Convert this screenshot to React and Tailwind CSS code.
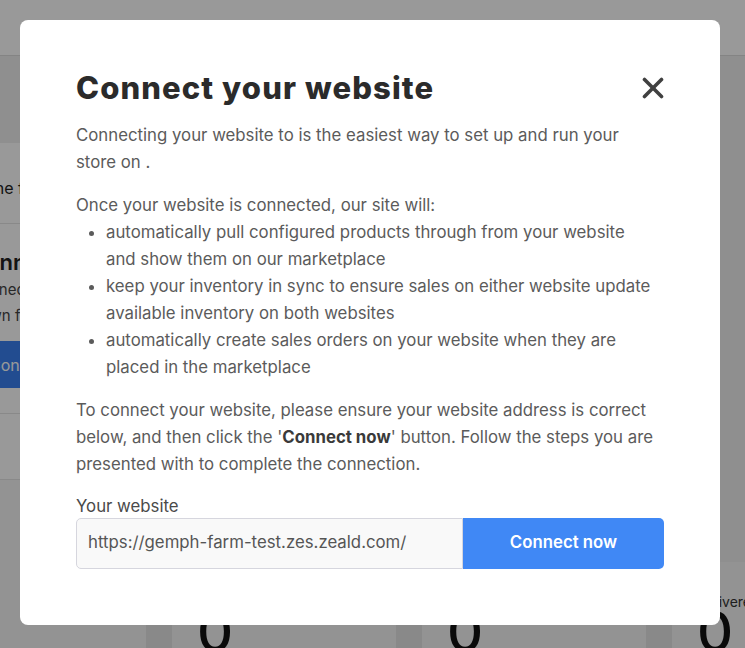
import React from "react";

const font = { fontFamily: "Inter, 'Noto Sans', sans-serif" };

function Background() {
  return (
    <div className="flex h-full w-full flex-col bg-[#eeeeee]">
      <div className="h-[56px] shrink-0 border-b border-[#dddddd] bg-white" />
      <div className="flex flex-1 flex-col">
        <div className="ml-[-130px] mt-[87px] flex w-[330px] flex-col">
          <div className="flex h-[80px] items-center whitespace-nowrap bg-white pl-[38px] pt-[10px] text-[16px] text-[#222]">
            Complete one field
          </div>
          <div className="flex h-[190px] flex-col whitespace-nowrap border-t border-[#e5e5e5] bg-white pl-[100px] pt-[23px]">
            <div className="text-[22px] font-semibold leading-[30px] text-[#222]">Connect</div>
            <div className="text-[15px] leading-[26px] text-[#444]">Connected sites</div>
            <div className="text-[15px] leading-[26px] text-[#444]">Down from here</div>
            <div className="ml-[-14px] mt-[12px] flex h-[47px] w-[200px] items-center bg-[#3a7ff0] pl-[33px] text-[16px] text-white">
              Connect
            </div>
          </div>
          <div className="h-[66px] border-t border-[#e5e5e5] bg-white" />
          <div className="h-[83px] border-t border-[#e5e5e5] bg-[#f6f6f6]" />
        </div>
        <div className="flex flex-1 gap-[26px] bg-[#e4e4e4]">
          <div className="ml-[-60px] w-[206px] shrink-0 bg-[#f5f5f5]" />
          {["Orders", "Pending", "Delivered"].map((label) => (
            <div key={label} className="flex w-[224px] shrink-0 flex-col bg-[#f5f5f5] pl-[25px] pt-[30px]">
              <div className="text-[14px] leading-[20px] text-[#333]">{label}</div>
              <div className="text-[56px] font-medium leading-[40px] text-[#111]">0</div>
            </div>
          ))}
        </div>
      </div>
    </div>
  );
}

function CloseIcon() {
  return (
    <svg width="22" height="22" viewBox="0 0 22 22" fill="none" stroke="#404040" strokeWidth="3.6" strokeLinecap="round">
      <line x1="2.5" y1="2.5" x2="19.5" y2="19.5" />
      <line x1="19.5" y1="2.5" x2="2.5" y2="19.5" />
    </svg>
  );
}

export default function App() {
  return (
    <div className="relative h-[648px] w-[745px] overflow-hidden" style={font}>
      <Background />
      <div className="absolute inset-0 bg-black/40 p-5">
        <div className="flex w-[700px] flex-col rounded-lg bg-white px-14 pb-14 pt-[50px] text-[16.8px] text-[#5b5b5b]">
          <div className="flex h-[36px] items-center justify-between">
            <h1 className="text-[31px] font-extrabold leading-[36px] tracking-[1.1px] text-[#2b2b2b]">
              Connect your website
            </h1>
            <CloseIcon />
          </div>
          <p className="mt-[15.5px] leading-[27px]">
            Connecting your website to is the easiest way to set up and run your
            <br />
            store on .
          </p>
          <p className="mt-4 leading-[27px]">Once your website is connected, our site will:</p>
          <ul className="list-disc pl-[30px] leading-[27px] marker:text-[#5b5b5b]">
            <li>
              automatically pull configured products through from your website
              <br />
              and show them on our marketplace
            </li>
            <li>
              keep your inventory in sync to ensure sales on either website update
              <br />
              available inventory on both websites
            </li>
            <li>
              automatically create sales orders on your website when they are
              <br />
              placed in the marketplace
            </li>
          </ul>
          <p className="mt-4 leading-[27px]">
            To connect your website, please ensure your website address is correct
            <br />
            below, and then click the '<span className="font-bold text-[#3a3a3a]">Connect now</span>' button. Follow the steps you are
            <br />
            presented with to complete the connection.
          </p>
          <label className="mt-4 block leading-6 text-[#4a4a4a]">Your website</label>
          <div className="flex h-[51px]">
            <div className="flex w-[387px] items-center rounded-l-[5px] border border-[#d6d6de] bg-[#f9f9f9] pl-[11px] text-[#555]">
              https://gemph-farm-test.zes.zeald.com/
            </div>
            <button className="flex flex-1 items-center justify-center rounded-r-[5px] bg-[#4088f5] font-semibold text-white">
              Connect now
            </button>
          </div>
        </div>
      </div>
    </div>
  );
}
